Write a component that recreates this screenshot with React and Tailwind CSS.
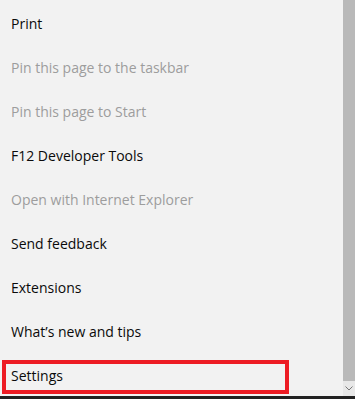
import React from "react";

const items = [
  { label: "Print" },
  { label: "Pin this page to the taskbar", disabled: true },
  { label: "Pin this page to Start", disabled: true },
  { label: "F12 Developer Tools" },
  { label: "Open with Internet Explorer", disabled: true },
  { label: "Send feedback" },
  { label: "Extensions" },
  { label: "What\u2019s new and tips" },
  { label: "Settings", boxed: true },
];

export default function App() {
  return (
    <div
      className="w-[355px] h-[399px] flex flex-col bg-[#f2f2f2] overflow-hidden"
      style={{ fontFamily: "'Open Sans', 'Noto Sans', sans-serif" }}
    >
      <div className="flex flex-1 min-h-0">
        <ul className="flex-1 flex flex-col">
          {items.map((it) => (
            <li
              key={it.label}
              className={`relative h-[44px] flex items-center pl-[11px] pt-[2px] text-[14px] ${
                it.disabled ? "text-[#9d9d9d]" : "text-[#0a0a0a]"
              }`}
            >
              {it.boxed && (
                <span className="absolute left-[2px] top-[8px] w-[287px] h-[34px] border-4 border-[#ed1c24]" />
              )}
              <span className="relative">{it.label}</span>
            </li>
          ))}
        </ul>
        <div className="w-[12px] flex flex-col bg-[#e8e8e8]">
          <div className="h-[381px] bg-[#b9b9b9]" />
          <div className="flex-1 flex items-center justify-center">
            <svg width="8" height="5" viewBox="0 0 8 5">
              <path d="M0.5 0.5 L4 4 L7.5 0.5" fill="none" stroke="#777" strokeWidth="1" />
            </svg>
          </div>
        </div>
      </div>
      <div className="h-[3px] bg-[#222]" />
    </div>
  );
}
